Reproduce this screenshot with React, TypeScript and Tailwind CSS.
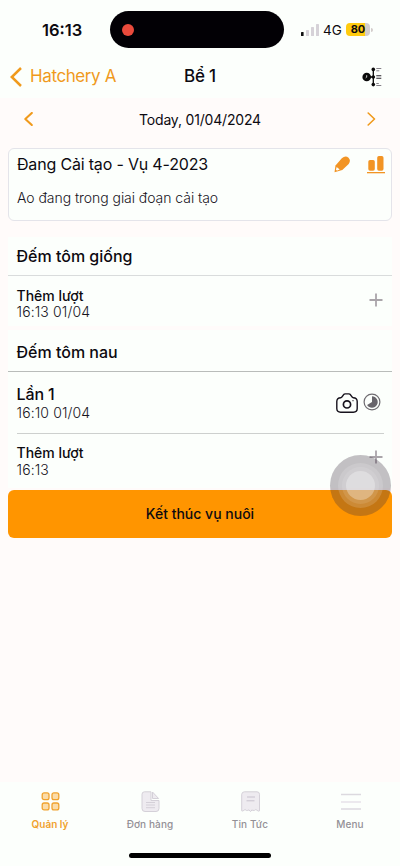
import type {ReactNode} from 'react';

function StatusBar() {
    return (
        <div className="h-[59px] flex items-start">
            <div className="w-[110px] pl-[42px] pt-[19px] text-[16.5px] leading-[22px] font-semibold">16:13</div>
            <div className="mt-[11px] w-[174px] h-[37px] rounded-full bg-[#020005] flex items-center pl-[12px]">
                <div className="w-3 h-3 rounded-full bg-[#ea4a3c]"/>
            </div>
            <div className="pl-[17px] pt-[18px] h-[41px] flex items-center">
                <svg width="18" height="12" viewBox="0 0 18 12" className="shrink-0">
                    <rect x="0" y="8" width="2.6" height="4" rx="0.6" fill="#111"/>
                    <rect x="5" y="6" width="3" height="6" rx="0.6" fill="#d6d2d8"/>
                    <rect x="10" y="3" width="3" height="9" rx="0.6" fill="#d6d2d8"/>
                    <rect x="15" y="0" width="3" height="12" rx="0.6" fill="#d6d2d8"/>
                </svg>
                <span className="ml-1 w-[20px] text-[13.5px] leading-[20px]">4G</span>
                <div className="ml-[3px] w-[24px] h-[13px] rounded-[4px] bg-[linear-gradient(to_right,#ffcb0f_80%,#d3cdcb_80%)] text-[11px] leading-[13px] font-bold text-center">
                    80
                </div>
                <div className="ml-[1px] w-[1.5px] h-1 rounded-r bg-[#d3cdcb]"/>
            </div>
        </div>
    );
}

function TimelineIcon() {
    return (
        <svg width="20" height="20" viewBox="0 0 20 20" fill="#0a0a0a">
            <circle cx="4.7" cy="10" r="4.3"/>
            <path d="M4.7 8.2v2l-1 .7" stroke="#fcfffc" strokeWidth="0.8" fill="none"/>
            <path d="M8 10h4M11.3 2v16" stroke="#0a0a0a" strokeWidth="1.3"/>
            <circle cx="11.3" cy="2.4" r="1.8"/>
            <circle cx="11.3" cy="10" r="1.8"/>
            <circle cx="11.3" cy="17.6" r="1.8"/>
            <path d="M14.3 1.5h5M14.3 3.8h3M14.3 16.5h2.5M14.3 18.5h5" stroke="#77737c" strokeWidth="0.9"/>
            <path d="M14.3 8.8h5M14.3 11.2h5" stroke="#28242c" strokeWidth="1.1"/>
        </svg>
    );
}

function PencilIcon() {
    return (
        <svg width="16" height="17" viewBox="0 0 16 17">
            <path d="M0.5 16.2 1.5 9.6 7.8 2.3Q11.5 -0.8 14.5 1.8Q17.2 4.6 14.7 8L8.3 14Z" fill="#f29424"/>
            <path d="M2.7 11 5.7 13.6 2.8 14.8Q2.7 13.8 1.9 13.7Z" fill="#fcfffc"/>
        </svg>
    );
}

function ChartIcon() {
    return (
        <svg width="18" height="19" viewBox="0 0 18 19" fill="#f29424">
            <rect x="1.3" y="5" width="6.5" height="10.8" rx="1.7"/>
            <rect x="10.2" y="1" width="6.3" height="14.8" rx="1.7"/>
            <rect x="0" y="17" width="18" height="1.3"/>
        </svg>
    );
}

function CameraIcon() {
    return (
        <svg width="22" height="20" viewBox="0 0 22 20" fill="none" stroke="#17131d" strokeWidth="1.4">
            <path d="M4.8 4.7C6.8 4.6 6.7 1 9 0.9h4c2.3 .1 2.2 3.7 4.2 3.8C20 4.8 21.2 6.3 21.2 8.6V15.5C21.2 18 19.8 19.2 17.4 19.2H4.6C2.2 19.2 0.8 18 0.8 15.5V8.6C0.8 6.3 2 4.8 4.8 4.7Z"/>
            <circle cx="11" cy="11.4" r="3.6" strokeWidth="1.7"/>
            <circle cx="17" cy="7.7" r="0.6" fill="#17131d" stroke="none"/>
        </svg>
    );
}

function ProgressIcon() {
    return (
        <svg width="18" height="18" viewBox="0 0 18 18">
            <circle cx="9" cy="9" r="7.9" fill="none" stroke="#6e6b70" strokeWidth="1.2"/>
            <path d="M9 9V3.3A5.7 5.7 0 1 1 4.1 11.9Z" fill="#68656b"/>
        </svg>
    );
}

function Plus() {
    return (
        <svg width="14" height="14" viewBox="0 0 14 14" stroke="#aaa5aa" strokeWidth="1.8">
            <path d="M7 0.5v13M0.5 7h13"/>
        </svg>
    );
}

function Arrow({flip}: {flip?: boolean}) {
    return (
        <svg width="9" height="14" viewBox="0 0 9 14" fill="none" stroke="#f09a1c"
             strokeWidth={flip ? 1.6 : 2.1} strokeLinecap="round" strokeLinejoin="round">
            <path d={flip ? 'M1.2 1 7.5 7 1.2 13' : 'M7.8 1 1.3 7 7.8 13'}/>
        </svg>
    );
}

function CountRow({title, time, titleClass, children}: {title: string; time: string; titleClass: string; children: ReactNode}) {
    return (
        <div className="flex justify-between">
            <div>
                <div className={titleClass}>{title}</div>
                <div className="text-[14px] leading-4 tracking-[0.12px] font-light text-[#18141c]">{time}</div>
            </div>
            {children}
        </div>
    );
}

const tabs = [
    {
        label: 'Quản lý',
        icon: (
            <g fill="#fbdca8" stroke="#f0a22e" strokeWidth="1.3">
                <rect x="2.2" y="1.9" width="6.8" height="6.8" rx="1.9"/>
                <rect x="12" y="1.9" width="6.8" height="6.8" rx="1.9"/>
                <rect x="2.2" y="12" width="6.8" height="6.8" rx="1.9"/>
                <rect x="12" y="12" width="6.8" height="6.8" rx="1.9"/>
            </g>
        ),
    },
    {
        label: 'Đơn hàng',
        icon: (
            <g fill="#eeebf0" stroke="#d4d0d8" strokeWidth="1">
                <path d="M4.5 .8h6.5v8.7h8v8q0 3-3 3H5q-3 0-3-3V3.3q0-2.5 2.5-2.5Z"/>
                <path d="M12.5 1 18.6 7.5h-6.1Z"/>
                <path d="M6 11.5h9M6 14h9M6 16.7h9"/>
            </g>
        ),
    },
    {
        label: 'Tin Tức',
        icon: (
            <g fill="#eeebf0" stroke="#d4d0d8" strokeWidth="1">
                <path d="M4.5 .8h12.500q2.500 0 2.500 2.500v16.500q-1.200 .8-2.300-.4-1.400-1.800-2.700 0l-1.600 0q-1.300-1.200-1.700 .6-.7 1-1.400 0-.6-2-2-.6l-1.500 0q-1.300-1.800-2.500 0-1.200 1-2.100 .4V3.300Q1.900 .8 4.500 .8Z"/>
                <path d="M7 6h8M6.500 9.800h8" stroke="#c8c2ce"/>
            </g>
        ),
    },
    {
        label: 'Menu',
        icon: (
            <g fill="none" stroke="#dcd9df" strokeWidth="1.6">
                <path d="M1 3.500h20M1 18h20"/>
                <path d="M1 11h20" stroke="#ece9ee" strokeWidth="2"/>
            </g>
        ),
    },
];

export default function App() {
    return (
        <div className="relative w-[400px] h-[866px] overflow-hidden flex flex-col bg-[#fffbfa] text-[#0c0a10] font-[Inter,sans-serif]">
            <div className="bg-[#fcfffc] h-[98px] shrink-0">
                <StatusBar/>
                <div className="grid grid-cols-3 items-center h-[35px] px-[10px]">
                    <div className="flex items-center text-[#f09a1c] text-[17px]">
                        <svg width="12" height="20" viewBox="0 0 12 20" fill="none" stroke="currentColor" strokeWidth="2.5">
                            <path d="M11 1 1.8 10 11 19"/>
                        </svg>
                        <span className="ml-2 whitespace-nowrap tracking-[-0.4px]">Hatchery A</span>
                    </div>
                    <div className="text-center text-[17px] tracking-[-0.2px] font-medium">Bể 1</div>
                    <div className="flex justify-end pr-2"><TimelineIcon/></div>
                </div>
            </div>

            {/* Date picker */}
            <div className="h-[50px] shrink-0 flex items-center justify-between px-[24px] pb-[8px]">
                <Arrow/>
                <span className="text-[14px] tracking-[-0.18px]">Today, 01/04/2024</span>
                <Arrow flip/>
            </div>

            {/* Current crop */}
            <div className="mx-2 h-[73px] shrink-0 border border-[#e4e4ea] rounded-md bg-[#fcfffc] pl-2 pr-[6px] pt-[5px]">
                <div className="flex justify-between">
                    <span className="text-[16px] leading-5 tracking-[-0.18px]">Đang Cải tạo - Vụ 4-2023</span>
                    <div className="flex items-center gap-[17px]">
                        <PencilIcon/>
                        <ChartIcon/>
                    </div>
                </div>
                <div className="mt-[14px] text-[14px] leading-5 tracking-[-0.05px] font-light text-[#18141c]">Ao đang trong giai đoạn cải tạo</div>
            </div>

            <div className="mx-2 mt-[16px] h-[89px] shrink-0 bg-[#fcfffc]">
                <div className="h-[39px] border-b border-[#d9dcdc] pl-[8.5px] pt-[8px] text-[16px] leading-[22px] font-medium">Đếm tôm giống</div>
                <div className="pl-[8.5px] pr-[9px] pt-[11px]">
                    <CountRow title="Thêm lượt" time="16:13 01/04" titleClass="text-[14px] leading-[17px] font-medium">
                        <div className="pt-[6px]"><Plus/></div>
                    </CountRow>
                </div>
            </div>

            <div className="mx-2 mt-[4px] h-[158px] shrink-0 bg-[#fcfffc]">
                <div className="h-[42px] border-b border-[#b9bcba] pl-[8.5px] pt-[11px] text-[16px] leading-[22px] font-medium">Đếm tôm nau</div>
                <div className="mx-[8.5px] h-[62px] border-b border-[#cdd0ce] pt-[12px]">
                    <CountRow title="Lần 1" time="16:10 01/04" titleClass="text-[16px] leading-[21px] tracking-[-0.1px] font-medium">
                        <div className="flex items-center gap-[5px] pr-[3px]">
                            <CameraIcon/>
                            <div className="pb-[2px]"><ProgressIcon/></div>
                        </div>
                    </CountRow>
                </div>
                <div className="pl-[8.5px] pr-[9px] pt-[10px]">
                    <CountRow title="Thêm lượt" time="16:13" titleClass="text-[14px] leading-[18px] font-medium">
                        <div className="pt-[6px]"><Plus/></div>
                    </CountRow>
                </div>
            </div>

            <button className="mx-2 mt-[2px] h-[47.5px] shrink-0 rounded-md bg-[#ff9500] text-[14px] font-medium">
                Kết thúc vụ nuôi
            </button>

            {/* Floating assistive button */}
            <div className="absolute left-[330px] top-[455px] w-[61px] h-[61px] rounded-full bg-[#3a3040]/30 flex items-center justify-center">
                <div className="w-[45px] h-[45px] rounded-full bg-white/15 flex items-center justify-center">
                    <div className="w-[37px] h-[37px] rounded-full bg-white/10 flex items-center justify-center">
                        <div className="w-[29px] h-[29px] rounded-full bg-white/30"/>
                    </div>
                </div>
            </div>

            <div className="mt-auto h-[84px] shrink-0 bg-[#fcfffc] relative">
                <div className="grid grid-cols-4 pt-[9px]">
                    {tabs.map((tab, i) => (
                        <div key={tab.label} className={`flex flex-col items-center text-[10px] leading-[14px] ${i === 0 ? 'text-[#f0a22e] font-semibold' : 'text-[#939096] font-medium tracking-[0.1px]'}`}>
                            <svg width="22" height="22" viewBox="0 0 22 22" className="ml-[2px]">{tab.icon}</svg>
                            <span className="mt-[4px]">{tab.label}</span>
                        </div>
                    ))}
                </div>
                <div className="absolute left-[129px] bottom-[8px] w-[142px] h-[5px] rounded-full bg-black"/>
            </div>
        </div>
    );
}
